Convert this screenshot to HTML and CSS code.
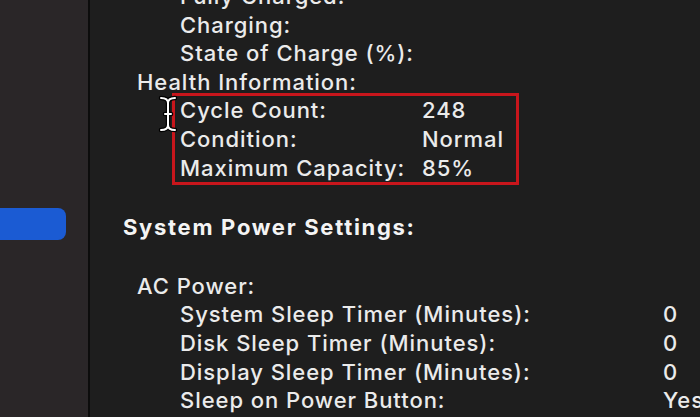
FILE: index.html
```html
<!DOCTYPE html>
<html lang="en">
<head>
    <meta charset="UTF-8">
    <meta name="viewport" content="width=device-width, initial-scale=1.0">
    <title>System Information</title>
    <link rel="stylesheet" href="styles.css">
</head>
<body>

    <!-- Sidebar with the selected item -->
    <aside class="sidebar">
        <div class="sidebar-item selected"></div>
    </aside>
    <div class="divider"></div>

    <!-- Report Contents -->
    <main class="report">
        <div class="row level-2"><span class="label">Fully Charged:</span></div>
        <div class="row level-2"><span class="label">Charging:</span></div>
        <div class="row level-2"><span class="label">State of Charge (%):</span></div>
        <div class="row level-1"><span class="label">Health Information:</span></div>

        <!-- Highlighted health rows -->
        <div class="highlight">
            <svg class="ibeam" width="22" height="38" viewBox="0 0 22 38">
                <path d="M4 3 C9 3 11 5 11 8 L11 30 C11 33 9 35 4 35 M18 3 C13 3 11 5 11 8 M11 30 C11 33 13 35 18 35 M8 19 L14 19"
                      fill="none" stroke="#000" stroke-width="4.5" stroke-linecap="round"/>
                <path d="M4 3 C9 3 11 5 11 8 L11 30 C11 33 9 35 4 35 M18 3 C13 3 11 5 11 8 M11 30 C11 33 13 35 18 35 M8 19 L14 19"
                      fill="none" stroke="#fff" stroke-width="2" stroke-linecap="round"/>
            </svg>
            <div class="row"><span class="label health">Cycle Count:</span><span class="value">248</span></div>
            <div class="row"><span class="label health">Condition:</span><span class="value">Normal</span></div>
            <div class="row"><span class="label health">Maximum Capacity:</span><span class="value">85%</span></div>
        </div>

        <h2 class="section-title">System Power Settings:</h2>

        <div class="row level-1"><span class="label">AC Power:</span></div>
        <div class="row level-2"><span class="label power">System Sleep Timer (Minutes):</span><span class="value">0</span></div>
        <div class="row level-2"><span class="label power">Disk Sleep Timer (Minutes):</span><span class="value">0</span></div>
        <div class="row level-2"><span class="label power">Display Sleep Timer (Minutes):</span><span class="value">0</span></div>
        <div class="row level-2"><span class="label power">Sleep on Power Button:</span><span class="value">Yes</span></div>
    </main>

</body>
</html>
```

FILE: styles.css
```css
/* Page */
body {
    margin: 0;
    height: 417px;
    overflow: hidden;
    display: flex;
    background-color: #1e1e1e;
    font-family: 'Inter', 'Liberation Sans', sans-serif;
    color: #ebebeb;
}

/* Sidebar */
.sidebar {
    width: 88px;
    flex-shrink: 0;
    background-color: #2a2628;
    padding-top: 208px;
}

.sidebar-item.selected {
    width: 66px;
    height: 32px;
    margin-left: -10px;
    padding-left: 10px;
    box-sizing: content-box;
    background-color: #1b5bd3;
    border-radius: 0 8px 8px 0;
}

.divider {
    width: 2px;
    flex-shrink: 0;
    background-color: #0c0c0c;
}

/* Report Text */
.report {
    flex: 1;
    margin-top: -18px;
    padding-left: 33px;
    font-size: 22px;
    font-weight: 500;
    line-height: 28.6px;
    letter-spacing: 0.95px;
    white-space: nowrap;
}

.row {
    display: flex;
}

.level-1 {
    padding-left: 14px;
}

.level-2 {
    padding-left: 57px;
}

.label.health {
    width: 242px;
}

.label.power {
    width: 483px;
}

/* Red outline round the health rows */
.highlight {
    position: relative;
    width: 336px;
    margin-left: 52px;
    padding-left: 5px;
    outline: 3px solid #c8161c;
}

.ibeam {
    position: absolute;
    left: -18px;
    top: -1px;
}

/* Section Heading */
.section-title {
    margin: 31px 0 30px 0;
    font-size: 22px;
    font-weight: 700;
    line-height: 28.6px;
    letter-spacing: 1.7px;
    color: #f4f4f4;
}
```
